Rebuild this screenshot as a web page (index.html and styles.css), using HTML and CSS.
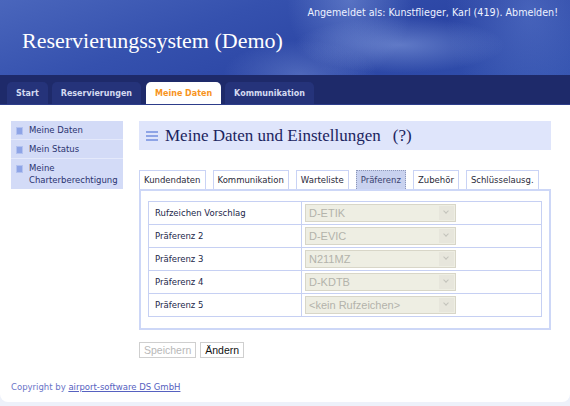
FILE: index.html
```html
<!DOCTYPE html>
<html lang="de">
<head>
    <meta charset="UTF-8">
    <title>Reservierungssystem (Demo)</title>
    <link rel="stylesheet" href="styles.css">
</head>
<body>
    <div class="page">
        <div class="masthead">
            <div class="login-info">Angemeldet als: Kunstflieger, Karl (419). <a href="#">Abmelden!</a></div>
            <h1>Reservierungssystem (Demo)</h1>
        </div>
        <ul class="mainnav">
            <li><a href="#">Start</a></li>
            <li><a href="#">Reservierungen</a></li>
            <li class="active"><a href="#">Meine Daten</a></li>
            <li><a href="#">Kommunikation</a></li>
        </ul>

        <div class="main">
            <ul class="sidebar">
                <li><span class="bullet"></span><a href="#">Meine Daten</a></li>
                <li><span class="bullet"></span><a href="#">Mein Status</a></li>
                <li><span class="bullet"></span><a href="#">Meine Charterberechtigung</a></li>
            </ul>

            <div class="content">
                <h2 class="page-title">
                    <span class="burger"><i></i><i></i><i></i></span>
                    <span>Meine Daten und Einstellungen</span>
                    <span class="help">(?)</span>
                </h2>

                <ul class="tabs">
                    <li>Kundendaten</li>
                    <li>Kommunikation</li>
                    <li>Warteliste</li>
                    <li class="active">Präferenz</li>
                    <li>Zubehör</li>
                    <li>Schlüsselausg.</li>
                </ul>
                <div class="tab-panel">
                    <table class="prefs">
                        <tr>
                            <td class="label">Rufzeichen Vorschlag</td>
                            <td><div class="select"><span>D-ETIK</span><b></b></div></td>
                        </tr>
                        <tr>
                            <td class="label">Präferenz 2</td>
                            <td><div class="select"><span>D-EVIC</span><b></b></div></td>
                        </tr>
                        <tr>
                            <td class="label">Präferenz 3</td>
                            <td><div class="select"><span>N211MZ</span><b></b></div></td>
                        </tr>
                        <tr>
                            <td class="label">Präferenz 4</td>
                            <td><div class="select"><span>D-KDTB</span><b></b></div></td>
                        </tr>
                        <tr>
                            <td class="label">Präferenz 5</td>
                            <td><div class="select"><span>&lt;kein Rufzeichen&gt;</span><b></b></div></td>
                        </tr>
                    </table>
                </div>

                <div class="buttons">
                    <button disabled>Speichern</button>
                    <button>Ändern</button>
                </div>
            </div>
        </div>

        <div class="footer">
            Copyright by <a href="#">airport-software DS GmbH</a>
        </div>
    </div>
</body>
</html>
```

FILE: styles.css
```css
body {
    margin: 0;
    background-color: #edf1fa;
    font-family: 'DejaVu Sans', Verdana, sans-serif;
    font-size: 8.5px;
    color: #222;
}
ul {
    list-style: none;
    margin: 0;
    padding: 0;
}
.page {
    background-color: #fff;
    border-radius: 0 0 8px 8px;
    height: 402px;
    overflow: hidden;
    display: flex;
    flex-direction: column;
}

/* Kopfbereich */
.masthead {
    height: 75px;
    box-sizing: border-box;
    padding: 7px 12px 0 22px;
    color: #fff;
    background:
        radial-gradient(ellipse 150px 40px at 400px 45px, rgba(160, 185, 240, 0.45), rgba(160, 185, 240, 0) 70%),
        radial-gradient(ellipse 110px 50px at 300px 75px, rgba(160, 185, 240, 0.3), rgba(160, 185, 240, 0) 70%),
        radial-gradient(ellipse 90px 110px at 350px 0px, rgba(160, 185, 240, 0.35), rgba(160, 185, 240, 0) 70%),
        radial-gradient(ellipse 120px 160px at 530px 10px, rgba(120, 150, 225, 0.35), rgba(120, 150, 225, 0) 70%),
        linear-gradient(160deg, #4a66bc 0%, #3551ae 35%, #2b45a4 65%, #3150ad 100%);
}
.login-info {
    text-align: right;
    font-size: 9.6px;
    color: #eef2ff;
}
.login-info a {
    color: #eef2ff;
    text-decoration: none;
}
.masthead h1 {
    margin: 10px 0 0;
    font-family: 'Liberation Serif', 'DejaVu Serif', serif;
    font-weight: normal;
    font-size: 22px;
    color: #fff;
}

/* Hauptnavigation */
.mainnav {
    height: 30px;
    box-sizing: border-box;
    background-color: #1e2a6a;
    border-bottom: 1px solid #2d3d8a;
    padding: 7px 0 0 7px;
    display: flex;
    gap: 4px;
}
.mainnav li {
    background-color: #25337a;
    border-radius: 5px 5px 0 0;
    padding: 0 9px;
    line-height: 23px;
}
.mainnav a {
    color: #d4daf0;
    text-decoration: none;
    font-weight: bold;
    font-size: 8px;
}
.mainnav li.active {
    background-color: #fff;
    margin-left: 1px;
}
.mainnav li.active a {
    color: #f7941d;
}

/* Inhalt */
.main {
    display: flex;
    padding: 16px 0 0 11px;
    flex: 1;
}
.sidebar {
    width: 112px;
    align-self: flex-start;
    background-color: #d3dbf7;
}
.sidebar li {
    display: flex;
    padding: 3px 4px 3px 5px;
    border-bottom: 1px solid #e4e9fb;
    line-height: 12px;
}
.sidebar li:last-child {
    border-bottom: none;
}
.sidebar .bullet {
    width: 5px;
    height: 6px;
    margin: 3px 6px 0 0;
    flex-shrink: 0;
    background-color: #8ea4e6;
    border: 1px solid #b3c2f0;
}
.sidebar a {
    color: #2a3370;
    text-decoration: none;
}
.content {
    width: 412px;
    margin-left: 16px;
}
.page-title {
    margin: 0;
    height: 29px;
    background-color: #dfe5fb;
    display: flex;
    align-items: center;
    padding-left: 7px;
    font-family: 'Liberation Serif', 'DejaVu Serif', serif;
    font-weight: normal;
    font-size: 17px;
    color: #1b2460;
}
.page-title .help {
    margin-left: 12px;
}
.burger {
    display: flex;
    flex-direction: column;
    gap: 2px;
    width: 12px;
    margin-right: 7px;
}
.burger i {
    display: block;
    height: 2px;
    background-color: #8ea4e6;
}

/* Reiter */
.tabs {
    display: flex;
    gap: 7px;
    margin-top: 20px;
}
.tabs li {
    border: 1px solid #c9d3f5;
    border-bottom: none;
    padding: 0 4px;
    line-height: 18px;
    color: #2a2a3a;
}
.tabs li.active {
    background-color: #c9d2ef;
    border: 1px dotted #8d97b8;
    border-bottom: none;
    color: #3a4370;
}
.tab-panel {
    border: 2px solid #cdd7f7;
    padding: 10px 7px 11px;
}
.prefs {
    width: 100%;
    border-collapse: collapse;
}
.prefs td {
    border: 1px solid #c6d0f3;
    height: 22px;
    padding: 0 3px;
}
.prefs td.label {
    width: 143px;
    padding-left: 6px;
    color: #22274a;
}
.select {
    width: 151px;
    height: 18px;
    box-sizing: border-box;
    border: 1px solid #d8d6c8;
    background-color: #eeeee3;
    display: flex;
    align-items: center;
    font-family: 'Liberation Sans', Arial, sans-serif;
    font-size: 11px;
    color: #b3b3ab;
}
.select span {
    flex: 1;
    padding-left: 3px;
}
.select b {
    width: 15px;
    height: 14px;
    margin-right: 1px;
    background-color: #e7e6dc;
    position: relative;
}
.select b::after {
    content: "";
    position: absolute;
    left: 5px;
    top: 3px;
    width: 3px;
    height: 3px;
    border-right: 1px solid #c3c3bb;
    border-bottom: 1px solid #c3c3bb;
    transform: rotate(45deg);
}

.buttons {
    margin-top: 12px;
    display: flex;
    gap: 4px;
}
.buttons button {
    font-family: 'Liberation Sans', Arial, sans-serif;
    font-size: 10.5px;
    height: 16px;
    padding: 0 4px;
    background-color: #fff;
    border: 1px solid #cfcfcf;
    color: #111;
    border-radius: 0;
}
.buttons button:disabled {
    color: #b8b8b8;
}

.footer {
    padding: 0 0 10px 11px;
    color: #6a74c8;
}
.footer a {
    color: #5661c0;
}
```
